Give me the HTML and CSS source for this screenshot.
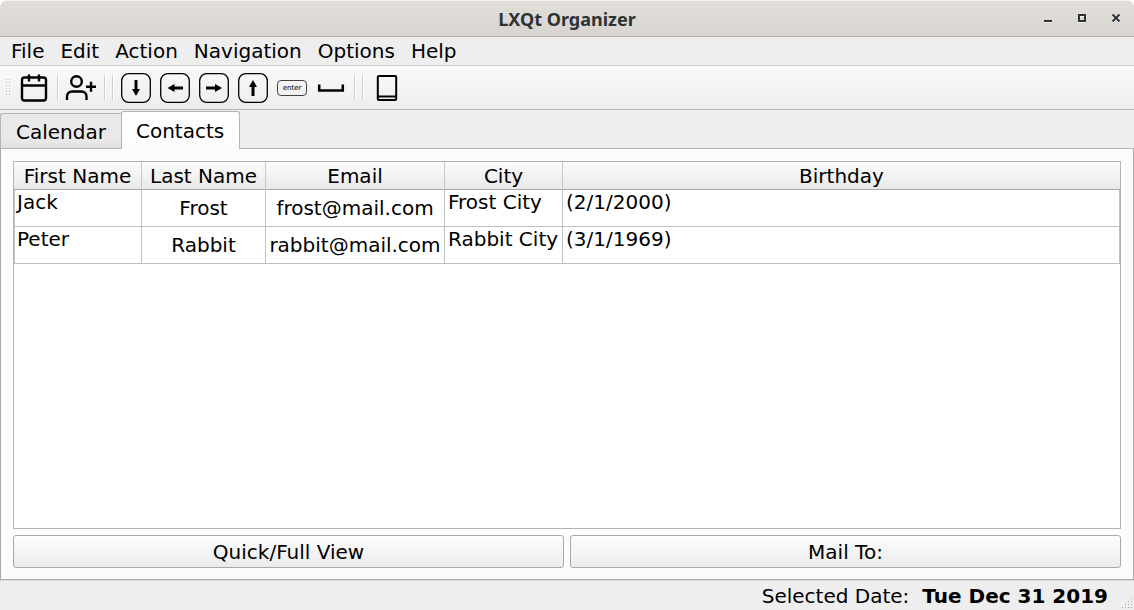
FILE: index.html
```html
<!DOCTYPE html>
<html lang="en">
<head>
<meta charset="utf-8">
<title>LXQt Organizer</title>
<link rel="stylesheet" href="styles.css">
</head>
<body>
<div class="window">
  <header class="titlebar">
    <h1 class="title">LXQt Organizer</h1>
    <div class="window-buttons">
      <button class="window-button" type="button" aria-label="Minimize"><svg width="34" height="36" viewBox="0 0 34 36"><path class="shine" d="M13 21h8v1h-8z"/><path class="mark" d="M13 19h8v2h-8z"/></svg></button>
      <button class="window-button" type="button" aria-label="Maximize"><svg width="34" height="36" viewBox="0 0 34 36"><path class="shine" d="M13 21h8v1h-8zM15 15h4v1h-4z"/><path class="mark" fill-rule="evenodd" d="M13 13h8v8h-8zM15 15v4h4v-4z"/></svg></button>
      <button class="window-button" type="button" aria-label="Close"><svg width="34" height="36" viewBox="0 0 34 36"><path class="cross-shine" d="M13.500 14.500l7 7M20.500 14.500l-7 7"/><path class="cross" d="M13.500 13.500l7 7M20.500 13.500l-7 7"/></svg></button>
    </div>
  </header>

  <nav class="menubar" aria-label="Main menu">
    <button class="menu" type="button">File</button>
    <button class="menu" type="button">Edit</button>
    <button class="menu" type="button">Action</button>
    <button class="menu" type="button">Navigation</button>
    <button class="menu" type="button">Options</button>
    <button class="menu" type="button">Help</button>
  </nav>

  <div class="toolbar" role="toolbar" aria-label="Tools">
    <svg class="handle" width="6" height="18" viewBox="0 0 6 18"><path d="M.5 0v18M3.500 0v18"/></svg>
    <button class="tool" type="button" aria-label="New appointment"><svg width="39" height="43" viewBox="0 0 39 43"><g class="line"><rect x="8" y="11.500" width="24" height="23" rx="2.500"/><path d="M8 19.500h24M15 8.500v7M25 8.500v7"/></g></svg></button>
    <span class="separator"></span>
    <button class="tool" type="button" aria-label="New contact"><svg width="39" height="43" viewBox="0 0 39 43"><g class="line"><circle cx="15.500" cy="15.500" r="5.300"/><path d="M6 34v-3.500a5 5 0 0 1 5-5h9.500a5 5 0 0 1 5 5V34M25 20.700h10M30 15.700v10"/></g></svg></button>
    <span class="separator"></span>
    <span class="separator"></span>
    <button class="tool" type="button" aria-label="Down"><svg width="39" height="43" viewBox="0 0 39 43"><rect class="key" x="5.700" y="7.700" width="28.600" height="28.600" rx="7"/><path d="M18.500 14h3v9h2.500l-4 7-4-7h2.500z"/></svg></button>
    <button class="tool" type="button" aria-label="Left"><svg width="39" height="43" viewBox="0 0 39 43"><rect class="key" x="5.700" y="7.700" width="28.600" height="28.600" rx="7"/><path d="M28 20.500v3h-8.500V26l-7-4 7-4v2.500z"/></svg></button>
    <button class="tool" type="button" aria-label="Right"><svg width="39" height="43" viewBox="0 0 39 43"><rect class="key" x="5.700" y="7.700" width="28.600" height="28.600" rx="7"/><path d="M12 20.500v3h9V26l7-4-7-4v2.500z"/></svg></button>
    <button class="tool" type="button" aria-label="Up"><svg width="39" height="43" viewBox="0 0 39 43"><rect class="key" x="5.700" y="7.700" width="28.600" height="28.600" rx="7"/><path d="M18.500 30h3v-9H24l-4-7-4 7h2.500z"/></svg></button>
    <button class="tool" type="button"><span class="enter-key">enter</span></button>
    <button class="tool" type="button" aria-label="Space"><svg width="39" height="43" viewBox="0 0 39 43"><path class="bar" d="M8.200 18.500v6h23.600v-6"/></svg></button>
    <span class="separator"></span>
    <span class="separator"></span>
    <button class="tool" type="button" aria-label="Address book"><svg width="39" height="43" viewBox="0 0 39 43"><g class="book"><rect x="11.800" y="10" width="18.400" height="24" rx="1"/><path d="M12 30.500h18"/></g></svg></button>
  </div>

  <div class="tabs" role="tablist">
    <button class="tab" type="button" role="tab" aria-selected="false">Calendar</button>
    <button class="tab tab-active" type="button" role="tab" aria-selected="true">Contacts</button>
  </div>

  <main class="pane">
    <div class="table-view">
      <table class="contacts">
        <colgroup><col class="col-first"><col class="col-last"><col class="col-email"><col class="col-city"><col></colgroup>
        <thead>
          <tr><th scope="col">First Name</th><th scope="col">Last Name</th><th scope="col">Email</th><th scope="col">City</th><th scope="col">Birthday</th></tr>
        </thead>
        <tbody>
          <tr><td>Jack</td><td class="centered">Frost</td><td class="centered">frost@mail.com</td><td>Frost City</td><td>(2/1/2000)</td></tr>
          <tr><td>Peter</td><td class="centered">Rabbit</td><td class="centered">rabbit@mail.com</td><td>Rabbit City</td><td>(3/1/1969)</td></tr>
        </tbody>
      </table>
    </div>
    <div class="actions">
      <button class="action" type="button">Quick/Full View</button>
      <button class="action" type="button">Mail To:</button>
    </div>
  </main>

  <footer class="statusbar">
    <span>Selected Date:</span>
    <strong>Tue Dec 31 2019</strong>
    <svg class="grip" width="12" height="12" viewBox="0 0 12 12"><path d="M9 0h1v1H9zM6 3h1v1H6zM9 3h1v1H9zM3 6h1v1H3zM6 6h1v1H6zM9 6h1v1H9zM0 9h1v1H0zM3 9h1v1H3zM6 9h1v1H6zM9 9h1v1H9z"/></svg>
  </footer>
</div>
</body>
</html>
```
FILE: styles.css
```css
* {
  box-sizing: border-box;
}

body {
  margin: 0;
  background: #fff;
  color: #000;
  font: 20px/24px "DejaVu Sans", sans-serif;
}

button {
  margin: 0;
  padding: 0;
  border: 0;
  background: none;
  color: inherit;
  font: inherit;
}

svg {
  display: block;
}

.window {
  display: flex;
  flex-direction: column;
  min-height: 100vh;
  border-radius: 8px 8px 0 0;
  background: #eee;
  overflow: hidden;
}

.titlebar {
  display: grid;
  grid-template-columns: 1fr auto 1fr;
  align-items: center;
  height: 37px;
  border-top: 1px solid #f4f3f2;
  border-bottom: 1px solid #bfb5a9;
  background: linear-gradient(#e1dedb, #d8d4cf);
}

.title {
  grid-column: 2;
  margin: 0;
  color: #2e3436;
  font: bold 18px/24px "Noto Sans", sans-serif;
}

.window-buttons {
  display: flex;
  justify-content: flex-end;
  padding-right: 1px;
}

.mark {
  fill: #2e3436;
}

.shine {
  fill: #f6f5f4;
}

.cross,
.cross-shine {
  fill: none;
  stroke: #2e3436;
  stroke-width: 2;
}

.cross-shine {
  stroke: #f6f5f4;
}

.menubar {
  display: flex;
  gap: 16px;
  height: 29px;
  padding: 2px 11px;
  border-bottom: 1px solid #cfcfcf;
}

.toolbar {
  display: flex;
  align-items: center;
  height: 44px;
  border-bottom: 1px solid #b4b4b4;
  background: linear-gradient(#fafafa, #ededed);
}

.handle {
  margin: 0 2px 0 6px;
  fill: none;
  stroke: #bbb;
  stroke-dasharray: 1 2;
}

.tool {
  width: 39px;
  height: 43px;
}

.separator {
  width: 2px;
  height: 25px;
  margin: 0 2px 0 4px;
  border-left: 1px solid #d0d0d0;
  background: #fff;
}

.line,
.book,
.key,
.bar {
  fill: none;
  stroke: #000;
  stroke-width: 2;
}

.line {
  stroke-width: 2.4;
}

.key {
  stroke-width: 1.3;
}

.bar {
  stroke-width: 2.5;
}

.enter-key {
  display: block;
  width: 30px;
  height: 16px;
  margin-left: 5px;
  border: 1px solid #444;
  border-radius: 4px;
  font-size: 7px;
  line-height: 14px;
  text-align: center;
}

.tabs {
  display: flex;
  align-items: flex-end;
  height: 39px;
  background: linear-gradient(#b4b4b4, #b4b4b4) bottom / 100% 1px no-repeat;
}

.tab {
  height: 36px;
  padding: 1px 15px 0;
  border: 1px solid #b4b4b4;
  border-right: 0;
  border-radius: 3px 0 0 0;
  background: linear-gradient(#e9e9e9 80%, #dedede);
}

.tab-active {
  height: 38px;
  padding: 0 15px 0 14px;
  border-right: 1px solid #b4b4b4;
  border-bottom: 0;
  border-radius: 3px 3px 0 0;
  background: linear-gradient(#fff, #fcfcfc);
}

.pane {
  display: flex;
  flex: 1;
  flex-direction: column;
  gap: 6px;
  padding: 12px 12px 11px;
  border: 1px solid #a8a8a8;
  border-top: 0;
  background: #fcfcfc;
}

.table-view {
  flex: 1;
  border: 1px solid #b4b4b4;
  background: #fff;
}

.contacts {
  width: 100%;
  border-collapse: separate;
  border-spacing: 0;
  table-layout: fixed;
}

.col-first {
  width: 128px;
}

.col-last {
  width: 124px;
}

.col-email {
  width: 179px;
}

.col-city {
  width: 118px;
}

.contacts th {
  height: 28px;
  padding: 0;
  border-right: 1px solid #c8c8c8;
  border-bottom: 1px solid #a8a8a8;
  background: linear-gradient(#fcfcfc, #e9e9e9);
  font-weight: normal;
}

.contacts td {
  height: 37px;
  padding: 0 3px;
  border-right: 1px solid #c0c0c0;
  border-bottom: 1px solid #c0c0c0;
  vertical-align: top;
  white-space: nowrap;
}

.contacts td:first-child {
  padding-left: 2px;
  border-left: 1px solid #c0c0c0;
}

.contacts .centered {
  text-align: center;
  vertical-align: middle;
}

.contacts th:last-child {
  border-right: 0;
}

.actions {
  display: flex;
  gap: 6px;
}

.action {
  flex: 1;
  height: 33px;
  border: 1px solid #a8a8a8;
  border-radius: 3px;
  background: linear-gradient(#fdfdfd, #ebebeb);
}

.statusbar {
  position: relative;
  display: flex;
  justify-content: flex-end;
  gap: 13px;
  height: 30px;
  padding: 3px 26px 3px 0;
  border-top: 1px solid #dcdcdc;
}

.grip {
  position: absolute;
  right: 0;
  bottom: 0;
  fill: #a8a8a8;
}
```
